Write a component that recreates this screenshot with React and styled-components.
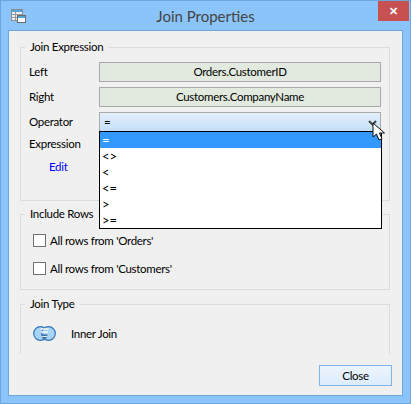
import React from "react";
import styled, { createGlobalStyle } from "styled-components";

const GlobalStyle = createGlobalStyle`
  html, body {
    margin: 0;
    padding: 0;
    background: #8ac4fa;
  }
`;

const operators = ["=", "<>", "<", "<=", ">", ">="];

const TitleIcon = () => (
  <svg width="15" height="14" viewBox="0 0 15 14">
    <rect x="0.5" y="0.5" width="11" height="11" fill="#e8eef4" stroke="#8c8c8c" />
    <rect x="1" y="1" width="10" height="2" fill="#4fa6d8" />
    <path d="M1 5.5h10M1 8.5h10M4.5 3v8" stroke="#9a9a9a" fill="none" />
    <rect x="6.5" y="6.5" width="8" height="7" fill="#fff" stroke="#6a6a6a" />
    <rect x="7" y="7" width="7" height="2" fill="#4fa6d8" />
  </svg>
);

const JoinIcon = () => (
  <svg width="23" height="15" viewBox="0 0 23 15">
    <circle cx="7.5" cy="7.5" r="6.8" fill="#a9d3f5" stroke="#2f74b5" strokeWidth="1.2" />
    <circle cx="15.5" cy="7.5" r="6.8" fill="#a9d3f5" stroke="#2f74b5" strokeWidth="1.2" />
    <path d="M7.5 3h8M8 6h7" stroke="#f4f9fd" strokeWidth="1.4" />
    <path d="M8.5 8.5h6l-1 4h-4z" fill="#3f6f99" />
    <path d="M9 10.5h5" stroke="#d8ebfa" />
  </svg>
);

const Cursor = () => (
  <svg width="14" height="20" viewBox="0 0 14 20">
    <path
      d="M1 1v14l3.5-3 2.5 6 3-1.3-2.6-5.7H12.500z"
      fill="#fff"
      stroke="#111"
      strokeWidth="1"
    />
  </svg>
);

export default function App() {
  return (
    <>
      <GlobalStyle />
      <Frame>
        <TitleBar>
          <IconSlot>
            <TitleIcon />
          </IconSlot>
          <Title>Join Properties</Title>
          <CloseX>✕</CloseX>
        </TitleBar>
        <Client>
          <Group $height={162}>
            <Legend>Join Expression</Legend>
            <FieldRow>
              <Label>Left</Label>
              <ReadOnlyField>Orders.CustomerID</ReadOnlyField>
            </FieldRow>
            <FieldRow>
              <Label>Right</Label>
              <ReadOnlyField>Customers.CompanyName</ReadOnlyField>
            </FieldRow>
            <FieldRow>
              <Label>Operator</Label>
              <Combo>
                =
                <Chevron viewBox="0 0 9 6" width="9" height="6">
                  <path d="M1 1l3.500 3.500L8 1" fill="none" stroke="#444" strokeWidth="2" />
                </Chevron>
                <DropList>
                  {operators.map((op, i) => (
                    <DropItem key={op} $selected={i === 0}>
                      {op}
                    </DropItem>
                  ))}
                </DropList>
                <CursorSlot>
                  <Cursor />
                </CursorSlot>
              </Combo>
            </FieldRow>
            <ExpressionLabel>Expression</ExpressionLabel>
            <EditLink>Edit</EditLink>
          </Group>
          <Group $height={84} $top={5}>
            <Legend>Include Rows</Legend>
            <CheckRow>
              <CheckBox />
              All rows from 'Orders'
            </CheckRow>
            <CheckRow>
              <CheckBox />
              All rows from 'Customers'
            </CheckRow>
          </Group>
          <Group $height={58} $top={6} $open>
            <Legend>Join Type</Legend>
            <JoinRow>
              <JoinIcon />
              <span>Inner Join</span>
            </JoinRow>
          </Group>
          <Footer>
            <CloseButton>Close</CloseButton>
          </Footer>
        </Client>
      </Frame>
    </>
  );
}

const Frame = styled.div`
  box-sizing: border-box;
  width: 411px;
  height: 404px;
  background: #8ac4fa;
  border: 1px solid #6fa6da;
  padding: 0 7px 7px 7px;
  display: flex;
  flex-direction: column;
  font-family: Lato, "Liberation Sans", sans-serif;
  font-size: 11.5px;
  letter-spacing: -0.3px;
  color: #000;
`;

const TitleBar = styled.div`
  position: relative;
  height: 29px;
  flex: none;
  display: flex;
  align-items: center;
  justify-content: center;
`;

const IconSlot = styled.div`
  position: absolute;
  left: 3px;
  top: 8px;
  line-height: 0;
`;

const Title = styled.div`
  font-size: 15px;
  letter-spacing: 0;
  color: #444;
`;

const CloseX = styled.div`
  position: absolute;
  right: -6px;
  top: 0;
  width: 31px;
  height: 20px;
  background: #c75050;
  color: #fff;
  font-size: 11px;
  font-weight: bold;
  text-align: center;
  line-height: 20px;
`;

const Client = styled.div`
  flex: 1;
  box-sizing: border-box;
  background: #f0f0f0;
  border: 1px solid #6fa6da;
  padding: 8px 12px 0 11px;
  display: flex;
  flex-direction: column;
`;

const Group = styled.fieldset`
  box-sizing: border-box;
  margin: ${(p) => p.$top || 0}px 0 0 0;
  padding: 0 8px;
  height: ${(p) => p.$height}px;
  flex: none;
  border: 1px solid #dcdcdc;
  border-bottom: ${(p) => (p.$open ? "none" : "1px solid #dcdcdc")};
  min-width: 0;
`;

const Legend = styled.legend`
  margin-left: -4px;
  padding: 0 5px;
  line-height: 16px;
`;

const FieldRow = styled.div`
  display: flex;
  align-items: center;
  height: 20px;
  margin-top: 5px;
  &:first-of-type {
    margin-top: 7px;
  }
`;

const Label = styled.div`
  width: 70px;
  flex: none;
  padding-bottom: 1px;
`;

const ReadOnlyField = styled.div`
  box-sizing: border-box;
  width: 283px;
  height: 20px;
  line-height: 17px;
  border: 1px solid #aaaaaa;
  background: #e2eadf;
  text-align: center;
`;

const Combo = styled.div`
  position: relative;
  box-sizing: border-box;
  width: 283px;
  height: 20px;
  line-height: 17px;
  padding-left: 4px;
  border: 1px solid #aaaaaa;
  background: linear-gradient(#e4f0fc, #c4dff9);
`;

const Chevron = styled.svg`
  position: absolute;
  right: 3px;
  top: 7px;
`;

const DropList = styled.div`
  position: absolute;
  left: -1px;
  top: 18px;
  box-sizing: border-box;
  width: 283px;
  height: 98px;
  background: #fff;
  border: 1px solid #000;
  z-index: 1;
`;

const DropItem = styled.div`
  height: 16px;
  line-height: 16px;
  padding-left: 2px;
  font-size: 13px;
  letter-spacing: 0;
  background: ${(p) => (p.$selected ? "#3399ff" : "transparent")};
  color: ${(p) => (p.$selected ? "#fff" : "#000")};
`;

const CursorSlot = styled.div`
  position: absolute;
  left: 272px;
  top: 9px;
  line-height: 0;
  z-index: 2;
`;

const ExpressionLabel = styled.div`
  margin-top: 4px;
  line-height: 16px;
`;

const EditLink = styled.div`
  margin: 7px 0 0 20px;
  line-height: 16px;
  color: #0000ff;
`;

const CheckRow = styled.div`
  display: flex;
  align-items: center;
  gap: 4px;
  height: 13px;
  margin: 15px 0 0 4px;
  &:first-of-type {
    margin-top: 12px;
  }
`;

const CheckBox = styled.div`
  box-sizing: border-box;
  width: 13px;
  height: 13px;
  flex: none;
  background: #fff;
  border: 1px solid #707070;
`;

const JoinRow = styled.div`
  display: flex;
  align-items: center;
  gap: 15px;
  margin: 14px 0 0 4px;
`;

const Footer = styled.div`
  display: flex;
  justify-content: flex-end;
  margin: 11px -2px 0 0;
`;

const CloseButton = styled.button`
  box-sizing: border-box;
  width: 73px;
  height: 21px;
  padding: 0;
  border: 1px solid #7eb4ea;
  background: linear-gradient(#ecf4fc, #dcecfc);
  font-family: inherit;
  font-size: 11.5px;
  letter-spacing: -0.3px;
  color: #000;
`;
